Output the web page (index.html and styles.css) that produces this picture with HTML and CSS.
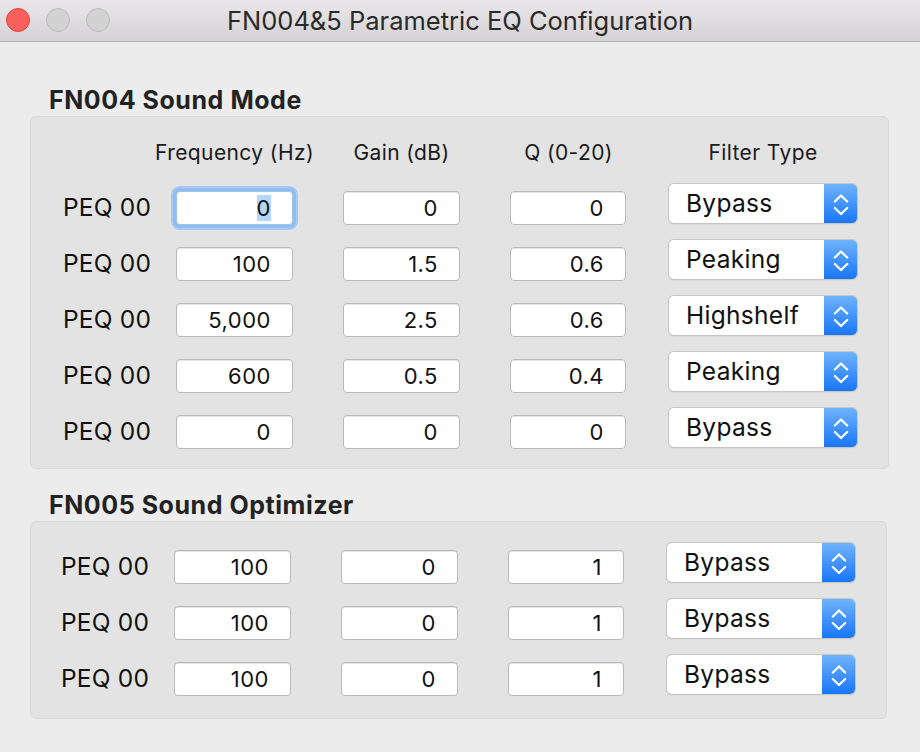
FILE: index.html
```html
<!DOCTYPE html>
<html>
<head>
<meta charset="utf-8">
<link rel="stylesheet" href="styles.css">
</head>
<body>
<div class="window">
  <div class="titlebar">
    <div class="lights">
      <span class="light red"></span>
      <span class="light gray"></span>
      <span class="light gray"></span>
    </div>
    <div class="title">FN004&amp;5 Parametric EQ Configuration</div>
  </div>
  <div class="content">
    <h2 class="heading">FN004 Sound Mode</h2>
    <div class="box box1">
      <div class="grid with-head">
        <div></div>
        <div class="colhead"><span>Frequency (Hz)</span></div>
        <div class="colhead"><span>Gain (dB)</span></div>
        <div class="colhead"><span>Q (0-20)</span></div>
        <div class="colhead head-select"><span>Filter Type</span></div>

        <div class="label">PEQ 00</div>
        <div class="field focused"><span class="sel">0</span></div>
        <div class="field">0</div>
        <div class="field">0</div>
        <div class="select"><span class="stext">Bypass</span><span class="arrows"><svg width="16" height="26" viewBox="0 0 16 26"><path d="M1.8 10.5 L8 4.5 L14.2 10.5 M1.8 17 L8 23 L14.2 17" fill="none" stroke="#fff" stroke-width="2.2" stroke-linecap="round" stroke-linejoin="round"/></svg></span></div>

        <div class="label">PEQ 00</div>
        <div class="field">100</div>
        <div class="field">1.5</div>
        <div class="field">0.6</div>
        <div class="select"><span class="stext">Peaking</span><span class="arrows"><svg width="16" height="26" viewBox="0 0 16 26"><path d="M1.8 10.5 L8 4.5 L14.2 10.5 M1.8 17 L8 23 L14.2 17" fill="none" stroke="#fff" stroke-width="2.2" stroke-linecap="round" stroke-linejoin="round"/></svg></span></div>

        <div class="label">PEQ 00</div>
        <div class="field">5,000</div>
        <div class="field">2.5</div>
        <div class="field">0.6</div>
        <div class="select"><span class="stext">Highshelf</span><span class="arrows"><svg width="16" height="26" viewBox="0 0 16 26"><path d="M1.8 10.5 L8 4.5 L14.2 10.5 M1.8 17 L8 23 L14.2 17" fill="none" stroke="#fff" stroke-width="2.2" stroke-linecap="round" stroke-linejoin="round"/></svg></span></div>

        <div class="label">PEQ 00</div>
        <div class="field">600</div>
        <div class="field">0.5</div>
        <div class="field">0.4</div>
        <div class="select"><span class="stext">Peaking</span><span class="arrows"><svg width="16" height="26" viewBox="0 0 16 26"><path d="M1.8 10.5 L8 4.5 L14.2 10.5 M1.8 17 L8 23 L14.2 17" fill="none" stroke="#fff" stroke-width="2.2" stroke-linecap="round" stroke-linejoin="round"/></svg></span></div>

        <div class="label">PEQ 00</div>
        <div class="field">0</div>
        <div class="field">0</div>
        <div class="field">0</div>
        <div class="select"><span class="stext">Bypass</span><span class="arrows"><svg width="16" height="26" viewBox="0 0 16 26"><path d="M1.8 10.5 L8 4.5 L14.2 10.5 M1.8 17 L8 23 L14.2 17" fill="none" stroke="#fff" stroke-width="2.2" stroke-linecap="round" stroke-linejoin="round"/></svg></span></div>
      </div>
    </div>

    <h2 class="heading heading2">FN005 Sound Optimizer</h2>
    <div class="box box2">
      <div class="grid">
        <div class="label">PEQ 00</div>
        <div class="field">100</div>
        <div class="field">0</div>
        <div class="field">1</div>
        <div class="select"><span class="stext">Bypass</span><span class="arrows"><svg width="16" height="26" viewBox="0 0 16 26"><path d="M1.8 10.5 L8 4.5 L14.2 10.5 M1.8 17 L8 23 L14.2 17" fill="none" stroke="#fff" stroke-width="2.2" stroke-linecap="round" stroke-linejoin="round"/></svg></span></div>

        <div class="label">PEQ 00</div>
        <div class="field">100</div>
        <div class="field">0</div>
        <div class="field">1</div>
        <div class="select"><span class="stext">Bypass</span><span class="arrows"><svg width="16" height="26" viewBox="0 0 16 26"><path d="M1.8 10.5 L8 4.5 L14.2 10.5 M1.8 17 L8 23 L14.2 17" fill="none" stroke="#fff" stroke-width="2.2" stroke-linecap="round" stroke-linejoin="round"/></svg></span></div>

        <div class="label">PEQ 00</div>
        <div class="field">100</div>
        <div class="field">0</div>
        <div class="field">1</div>
        <div class="select"><span class="stext">Bypass</span><span class="arrows"><svg width="16" height="26" viewBox="0 0 16 26"><path d="M1.8 10.5 L8 4.5 L14.2 10.5 M1.8 17 L8 23 L14.2 17" fill="none" stroke="#fff" stroke-width="2.2" stroke-linecap="round" stroke-linejoin="round"/></svg></span></div>
      </div>
    </div>
  </div>
</div>
</body>
</html>
```

FILE: styles.css
```css
* { box-sizing: border-box; }
html, body {
  margin: 0;
  padding: 0;
  width: 920px;
  height: 752px;
  overflow: hidden;
  background: #ececec;
  font-family: "Inter", "Liberation Sans", sans-serif;
  color: #1a1a1a;
}
.window {
  width: 920px;
  height: 752px;
  display: flex;
  flex-direction: column;
}
.titlebar {
  height: 42px;
  flex: none;
  background: linear-gradient(#e9e7e9, #d4d2d4);
  border-bottom: 1px solid #b3b1b3;
  display: flex;
  align-items: center;
  position: relative;
}
.lights {
  position: absolute;
  left: 6px;
  top: 8px;
  display: flex;
  gap: 16px;
}
.light {
  width: 24px;
  height: 24px;
  border-radius: 50%;
  display: block;
}
.light.red { background: #fc605c; border: 1px solid #e0443e; }
.light.gray { background: #d2d2d2; border: 1px solid #bdbdbd; }
.title {
  flex: 1;
  text-align: center;
  font-size: 25.5px;
  color: #2a2a2a;
}
.content {
  padding: 0 31px 0 30px;
}
.heading {
  margin: 42px 0 0 19px;
  font-size: 25px;
  font-weight: 700;
  letter-spacing: 0.55px;
  line-height: 32px;
  height: 32px;
  color: #222;
}
.heading2 {
  margin-top: 20px;
}
.box {
  background: #e3e3e3;
  border: 1px solid #d9d9d9;
  border-radius: 6px;
  padding: 21px 31px 0 32px;
}
.box1 { height: 353px; }
.box2 { height: 198px; margin-right: 2px; }
.box2 .grid { margin-left: -2px; }
.grid {
  display: grid;
  grid-template-columns: 113px 167px 167px 159px 188px;
  grid-auto-rows: 56px;
}
.grid.with-head { grid-template-rows: 46px; }
.colhead {
  width: 117px;
  display: flex;
  justify-content: center;
  white-space: nowrap;
  font-size: 21px;
  letter-spacing: 0.4px;
  line-height: 30px;
  color: #1a1a1a;
}
.colhead.head-select { width: 188px; }
.label {
  font-size: 24.5px;
  line-height: 34px;
  margin-top: 6px;
  letter-spacing: 0.2px;
  color: #111;
  white-space: nowrap;
}
.field {
  width: 117px;
  height: 34px;
  margin-top: 7px;
  background: #fff;
  border: 1px solid #b9b9b9;
  border-radius: 4px;
  box-shadow: inset 0 1px 0 #e8e8e8;
  text-align: right;
  padding-right: 21px;
  font-size: 22px;
  letter-spacing: 0.5px;
  line-height: 32px;
  color: #111;
}
.grid > .field:nth-child(5n+4) { width: 116px; }
.field.focused {
  border-color: #9cc2ef;
  box-shadow: 0 0 0 3px #92bdf0, 0 0 0 5px #a6c9f2;
}
.sel { background: #b3d7fe; }
.select {
  width: 188px;
  height: 39px;
  background: #fff;
  border-radius: 5px;
  box-shadow: 0 0 0 1px #c6c6c6, 0 1px 1px rgba(0,0,0,0.22);
  display: flex;
  align-items: stretch;
  overflow: hidden;
}
.stext {
  flex: 1;
  font-size: 24.5px;
  letter-spacing: 0.3px;
  line-height: 39px;
  padding-left: 17px;
  color: #111;
}
.arrows {
  width: 33px;
  background: linear-gradient(#6fb3fb, #1976f7);
  display: flex;
  align-items: center;
  justify-content: center;
}
```
